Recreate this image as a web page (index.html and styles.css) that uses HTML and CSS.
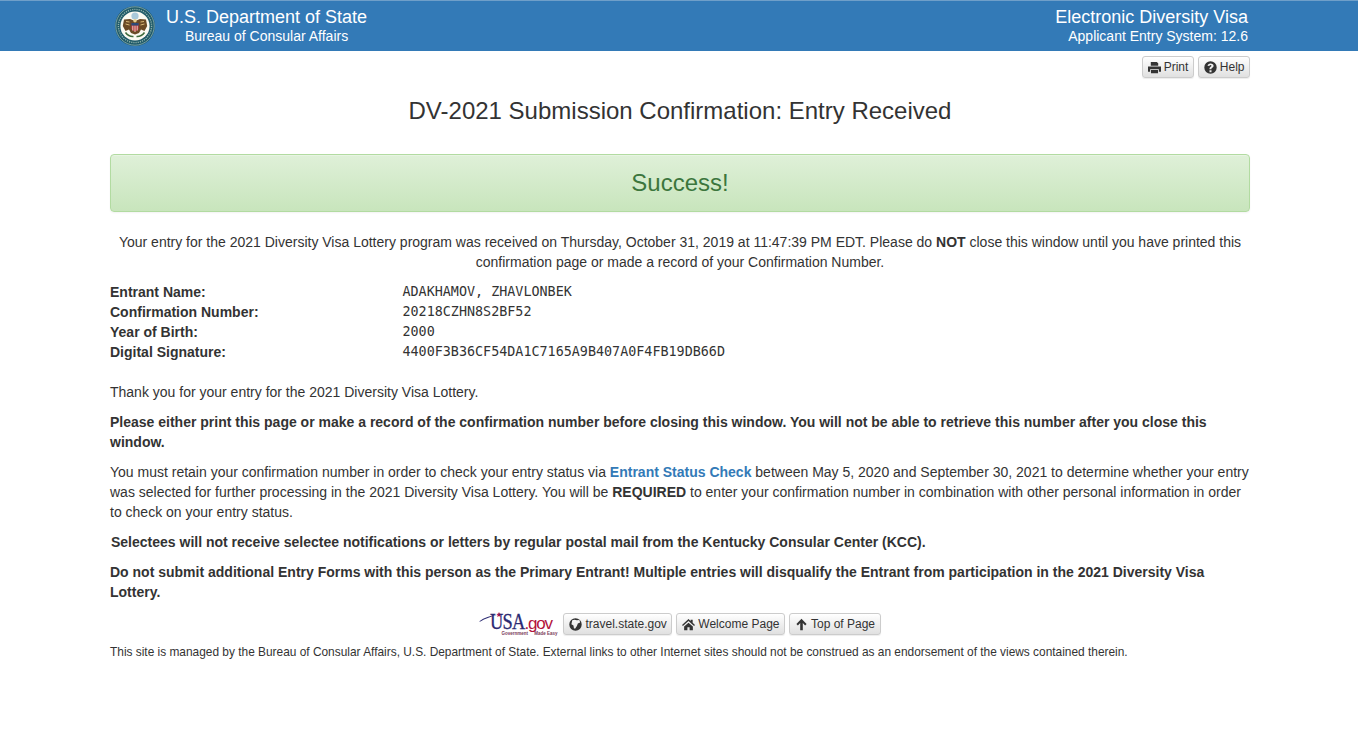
FILE: index.html
```html
<!DOCTYPE html>
<html lang="en">
<head>
<meta charset="utf-8">
<title>DV-2021 Submission Confirmation</title>
<link rel="stylesheet" href="styles.css">
</head>
<body>
<header class="banner">
  <div class="banner-inner">
    <div class="brand">
      <svg class="seal" viewBox="0 0 40 40" width="40" height="40" aria-hidden="true">
        <circle cx="20" cy="20" r="20" fill="#1f5a68"/>
        <circle cx="20" cy="20" r="19.2" fill="none" stroke="#cfe0dc" stroke-width=".5"/>
        <circle cx="20" cy="20" r="16.6" fill="none" stroke="#8fb0ac" stroke-width="1.4" stroke-dasharray="1.2 1"/>
        <circle cx="20" cy="20" r="14.6" fill="#fbfaf2"/>
        <circle cx="20" cy="10" r="3.600" fill="#a9c9da"/>
        <path d="M20 15 L15 13 L9 13.500 L7.800 20 L10.500 25 L14 23.500 L16 27 L20 28.500 L24 27 L26 23.500 L29.500 25 L32.200 20 L31 13.500 L25 13 Z" fill="#6b4a26"/>
        <path d="M11 15.500 L14.500 16 M10.500 18 L14.500 19 M29 15.500 L25.500 16 M29.500 18 L25.500 19" stroke="#d8b878" stroke-width="1"/>
        <path d="M16.300 17 H23.700 V23 Q20 28 16.300 23 Z" fill="#b5393e"/>
        <path d="M17.800 19.500 V24.500 M20 19.500 V26 M22.200 19.500 V24.500" stroke="#f6eee0" stroke-width=".8"/>
        <path d="M16.300 17 H23.700 V19.500 H16.300 Z" fill="#2c4a78"/>
        <circle cx="20" cy="14.700" r="1.700" fill="#e7cf8c"/>
        <path d="M10.500 26.500 Q14 31 18.500 30.500 M29.500 26.500 Q26 31 21.500 30.500" fill="none" stroke="#3f6b3c" stroke-width="1.600"/>
      </svg>
      <div class="brand-text">
        <div class="brand-main">U.S. Department of State</div>
        <div class="brand-sub">Bureau of Consular Affairs</div>
      </div>
    </div>
    <div class="system">
      <div class="brand-main">Electronic Diversity Visa</div>
      <div class="system-sub">Applicant Entry System: 12.6</div>
    </div>
  </div>
</header>

<main class="page">
  <div class="tools">
    <a class="btn" href="#">
      <svg class="icon" viewBox="0 0 14 14"><path d="M3 1h6.500L11 2.500V5.200H3Z M0 5.800h14V11.500h-2.300V8.800H2.300V11.500H0Z M3.200 9.700h7.600V13.300H3.200Z"/></svg>
      Print</a>
    <a class="btn" href="#">
      <svg class="icon" viewBox="0 0 14 14"><path fill-rule="evenodd" d="M7 .3a6.700 6.700 0 1 0 0 13.400a6.700 6.700 0 0 0 0-13.400Z M5.900 10h2.200v2.100H5.900Z M7 2.600c-1.800 0-3 1-3.200 2.600l2 .3c.1-.7.500-1.100 1.200-1.100s1 .3 1 .8c0 .4-.3.700-.8 1-1 .7-1.300 1.200-1.300 2.100v.6h2.100v-.4c0-.4.200-.7.800-1.100.9-.6 1.500-1.300 1.500-2.300 0-1.500-1.300-2.500-3.300-2.500Z"/></svg>
      Help</a>
  </div>

  <h1 class="title">DV-2021 Submission Confirmation: Entry Received</h1>

  <div class="success">Success!</div>

  <p class="received">Your entry for the 2021 Diversity Visa Lottery program was received on Thursday, October 31, 2019 at 11:47:39 PM EDT. Please do <b>NOT</b> close this window until you have printed this confirmation page or made a record of your Confirmation Number.</p>

  <dl class="details">
    <dt>Entrant Name:</dt><dd>ADAKHAMOV, ZHAVLONBEK</dd>
    <dt>Confirmation Number:</dt><dd>20218CZHN8S2BF52</dd>
    <dt>Year of Birth:</dt><dd>2000</dd>
    <dt>Digital Signature:</dt><dd>4400F3B36CF54DA1C7165A9B407A0F4FB19DB66D</dd>
  </dl>

  <p class="copy">Thank you for your entry for the 2021 Diversity Visa Lottery.</p>
  <p class="copy"><b>Please either print this page or make a record of the confirmation number before closing this window. You will not be able to retrieve this number after you close this window.</b></p>
  <p class="copy">You must retain your confirmation number in order to check your entry status via <a class="link" href="#">Entrant Status Check</a> between May 5, 2020 and September 30, 2021 to determine whether your entry was selected for further processing in the 2021 Diversity Visa Lottery. You will be <b>REQUIRED</b> to enter your confirmation number in combination with other personal information in order to check on your entry status.</p>
  <p class="copy indent"><b>Selectees will not receive selectee notifications or letters by regular postal mail from the Kentucky Consular Center (KCC).</b></p>
  <p class="copy"><b>Do not submit additional Entry Forms with this person as the Primary Entrant! Multiple entries will disqualify the Entrant from participation in the 2021 Diversity Visa Lottery.</b></p>

  <nav class="links">
    <a class="usagov" href="#">
      <svg class="usa-swoosh" viewBox="0 0 32 26" width="32" height="26" aria-hidden="true">
        <path d="M0 9.500 Q8 3.500 18 3 Q8 5.500 1.500 9.500 Z" fill="#2b2a72"/>
        <path d="M20 0l.8 1.700 1.900.2-1.400 1.200.4 1.900-1.700-1-1.700 1 .4-1.900-1.400-1.200 1.900-.2Z" fill="#b3133c"/>
      </svg>
      <span class="usa-word">USA</span><span class="gov-word">.gov</span>
      <span class="usa-tag"><span>Government</span><span>Made Easy</span></span>
    </a>
    <a class="btn" href="#">
      <svg class="icon" viewBox="0 0 14 14"><path fill-rule="evenodd" d="M7 .3a6.700 6.700 0 1 0 0 13.400a6.700 6.700 0 0 0 0-13.400Z M3.500 2.500 6 1.800l2.500.6 2.700-.2.800 2.600-2.500 1.200-1 2.500-2 3-1.200-.4-.5-3-2.200-1.500Z"/></svg>
      travel.state.gov</a>
    <a class="btn" href="#">
      <svg class="icon" viewBox="0 0 14 14"><path d="M7 1.200 0 7.500l1 1.100L7 3.300l6 5.300 1-1.100-2.500-2.300V2H9.300v1.300Z M2.300 9.200 7 5l4.700 4.200V13.200H8.200V10H5.800v3.200H2.300Z"/></svg>
      Welcome Page</a>
    <a class="btn" href="#">
      <svg class="icon" viewBox="0 0 14 14"><path d="M7 .8 1.500 6.400 3.100 8l2.500-2.500V13.200h2.800V5.500L10.900 8l1.600-1.600Z"/></svg>
      Top of Page</a>
  </nav>

  <p class="foot">This site is managed by the Bureau of Consular Affairs, U.S. Department of State. External links to other Internet sites should not be construed as an endorsement of the views contained therein.</p>
</main>
</body>
</html>
```

FILE: styles.css
```css
* { box-sizing: border-box; }

html, body { margin: 0; padding: 0; }

body {
  background: #fff;
  color: #333;
  font-family: "Liberation Sans", Arial, sans-serif;
  font-size: 14px;
  line-height: 20px;
}

.banner {
  height: 51px;
  background: #337ab7;
  border-top: 1px solid #6f9fc9;
  color: #fff;
}

.banner-inner {
  width: 1140px;
  margin-left: 110px;
  display: flex;
  justify-content: space-between;
  padding-right: 2px;
}

.brand { display: flex; padding-left: 5px; }
.seal { display: block; flex: none; margin-top: 5px; }

.brand-text { margin-left: 11px; }
.brand-main { font-size: 18px; line-height: 20px; margin-top: 6px; }
.brand-sub { font-size: 14px; line-height: 19px; margin-left: 19px; }

.system { text-align: right; }
.system-sub { font-size: 14px; line-height: 19px; }

.page { width: 1140px; margin-left: 110px; }

.tools {
  display: flex;
  justify-content: flex-end;
  gap: 4px;
  margin-top: 5px;
}

.btn {
  display: inline-flex;
  align-items: center;
  height: 22px;
  padding: 0 4.500px 0 5px;
  gap: 3px;
  font-size: 12px;
  line-height: 18px;
  color: #333;
  text-decoration: none;
  white-space: nowrap;
  background: linear-gradient(#fff, #e0e0e0);
  border: 1px solid #ccc;
  border-radius: 3px;
  box-shadow: 0 1px 1px rgba(0, 0, 0, .075);
}

.icon { width: 13px; height: 13px; fill: #333; flex: none; }

.title {
  margin: 20px 0 0;
  font-size: 24px;
  line-height: 26px;
  font-weight: 400;
  text-align: center;
}

.success {
  margin-top: 30px;
  height: 58px;
  line-height: 56px;
  font-size: 24px;
  text-align: center;
  color: #3c763d;
  background: linear-gradient(#dff0d8, #c8e5bc);
  border: 1px solid #b2dba1;
  border-radius: 4px;
  box-shadow: 0 1px 0 rgba(255, 255, 255, .25) inset, 0 1px 2px rgba(0, 0, 0, .05);
}

.received { margin: 20px 0 0; text-align: center; }

.details {
  display: grid;
  grid-template-columns: 292.5px 1fr;
  margin: 10px 0 0;
}

.details dt { font-weight: 700; }

.details dd {
  margin: 0;
  font-family: "DejaVu Sans Mono", "Liberation Mono", monospace;
  font-size: 13.4px;
}

.copy { margin: 0 0 10px; }
.details + .copy { margin-top: 20px; }
.indent { padding-left: 1px; }

.link { color: #337ab7; font-weight: 700; text-decoration: none; }

.links {
  display: flex;
  justify-content: center;
  align-items: center;
  gap: 4px;
  margin-top: 9px;
}

.usagov {
  position: relative;
  display: block;
  width: 80px;
  height: 24px;
  text-decoration: none;
  font-family: "Liberation Serif", serif;
}

.usa-swoosh { position: absolute; left: 0; top: 0; }

.usa-word {
  position: absolute;
  left: 11px;
  top: 0;
  font-size: 23px;
  line-height: 20px;
  letter-spacing: -1px;
  color: #2b2a72;
  -webkit-text-stroke: .3px #2b2a72;
  transform: scaleX(.8);
  transform-origin: left center;
}

.gov-word {
  position: absolute;
  left: 45px;
  top: 2px;
  font-family: "Liberation Sans", sans-serif;
  font-size: 17px;
  line-height: 20px;
  letter-spacing: -1.2px;
  color: #b3133c;
}

.usa-tag {
  position: absolute;
  left: 22px;
  top: 20px;
  width: 56px;
  display: flex;
  justify-content: space-between;
  font-family: "Liberation Sans", sans-serif;
  font-size: 4.5px;
  font-weight: 700;
  line-height: 4px;
  white-space: nowrap;
  color: #7a3a5a;
}

.foot {
  margin: 7px 0 0;
  font-size: 11.9px;
  line-height: 18px;
}
```
